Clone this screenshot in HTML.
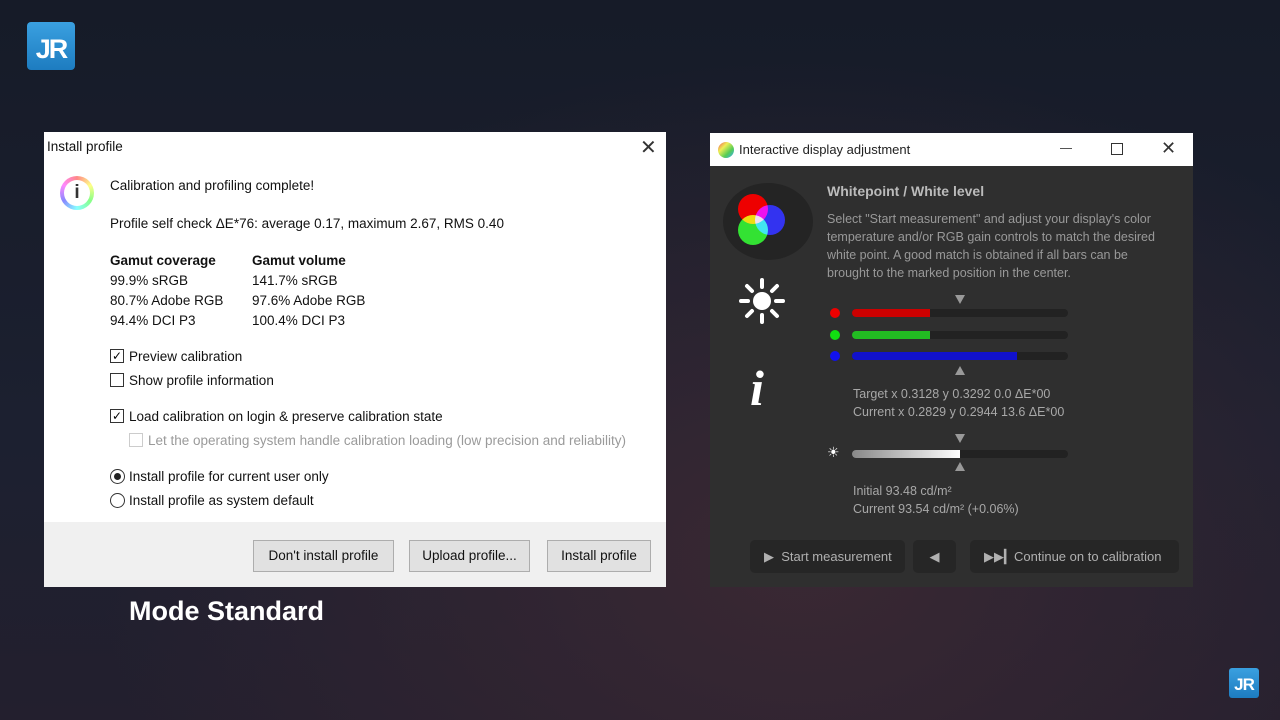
<!DOCTYPE html>
<html><head><meta charset="utf-8"><style>
*{margin:0;padding:0;box-sizing:border-box}
body{width:1280px;height:720px;overflow:hidden;position:relative;font-family:"Liberation Sans",sans-serif;
background:radial-gradient(ellipse 700px 500px at 800px 560px,#3a2833 0%,rgba(40,30,45,0) 100%),linear-gradient(180deg,#161b28 0%,#1c2030 60%,#231f2e 100%)}
.a{position:absolute;white-space:nowrap}
.dlg{position:absolute;left:44px;top:132px;width:622px;height:455px;background:#fff}
.dlg .a{font-size:13.5px;color:#111}
.foot{position:absolute;left:0;top:390px;width:622px;height:65px;background:#f0f0f0}
.btn{position:absolute;top:408px;height:32px;border:1px solid #adadad;background:#e1e1e1;font-size:13.5px;color:#111;text-align:center;line-height:30px}
.cb{position:absolute;width:14px;height:14px;border:1px solid #333;background:#fff}
.rb{position:absolute;width:15px;height:15px;border:1px solid #333;border-radius:50%;background:#fff}
.win{position:absolute;left:710px;top:133px;width:483px;height:454px;background:#2f2f2f}
.tb{position:absolute;left:0;top:0;width:483px;height:33px;background:#fff}
.win .t{font-size:12.5px;color:#a8a8a8}
.bar{position:absolute;left:142px;width:216px;height:8px;background:#222;border-radius:4px;overflow:hidden}
.dot{position:absolute;left:120px;width:10px;height:10px;border-radius:50%}
.tri{position:absolute;width:0;height:0;border-left:5px solid transparent;border-right:5px solid transparent}
.wb{position:absolute;top:407px;height:33px;background:#262626;border-radius:5px;color:#b0b0b0;font-size:13px;line-height:33px}
</style></head><body>
<div class="a" style="left:27px;top:22px;width:48px;height:48px;background:linear-gradient(#3aa0e0,#1d7cc0);border-radius:4px;color:#fff;font-weight:bold;font-size:27px;line-height:54px;text-align:center;letter-spacing:-2px">JR</div>
<div class="a" style="left:1229px;top:668px;width:30px;height:30px;background:linear-gradient(#3aa0e0,#1d7cc0);border-radius:3px;color:#fff;font-weight:bold;font-size:17px;line-height:33px;text-align:center;letter-spacing:-1px">JR</div>

<div class="dlg">
<div class="a" style="left:3px;top:7px">Install profile</div>
<div class="a" style="left:596px;top:3px;font-size:20px;color:#333">✕</div>
<div class="a" style="left:16px;top:44px;width:34px;height:34px;border-radius:50%;background:conic-gradient(#f88,#ff8,#8f8,#8ff,#88f,#f8f,#f88);"></div>
<div class="a" style="left:20px;top:48px;width:26px;height:26px;border-radius:50%;background:#fff;text-align:center;font-weight:bold;font-size:19px;line-height:26px;color:#333">i</div>
<div class="a" style="left:66px;top:46px">Calibration and profiling complete!</div>
<div class="a" style="left:66px;top:84px">Profile self check ΔE*76: average 0.17, maximum 2.67, RMS 0.40</div>
<div class="a" style="left:66px;top:121px;font-weight:bold">Gamut coverage</div>
<div class="a" style="left:66px;top:141px">99.9% sRGB</div>
<div class="a" style="left:66px;top:161px">80.7% Adobe RGB</div>
<div class="a" style="left:66px;top:181px">94.4% DCI P3</div>
<div class="a" style="left:208px;top:121px;font-weight:bold">Gamut volume</div>
<div class="a" style="left:208px;top:141px">141.7% sRGB</div>
<div class="a" style="left:208px;top:161px">97.6% Adobe RGB</div>
<div class="a" style="left:208px;top:181px">100.4% DCI P3</div>
<div class="cb" style="left:66px;top:217px;font-size:12px;line-height:12px;text-align:center">✓</div>
<div class="a" style="left:85px;top:217px">Preview calibration</div>
<div class="cb" style="left:66px;top:241px"></div>
<div class="a" style="left:85px;top:241px">Show profile information</div>
<div class="cb" style="left:66px;top:277px;font-size:12px;line-height:12px;text-align:center">✓</div>
<div class="a" style="left:85px;top:277px">Load calibration on login &amp; preserve calibration state</div>
<div class="cb" style="left:85px;top:301px;border-color:#ccc"></div>
<div class="a" style="left:104px;top:301px;color:#9a9a9a">Let the operating system handle calibration loading (low precision and reliability)</div>
<div class="rb" style="left:66px;top:337px"><div style="position:absolute;left:3px;top:3px;width:7px;height:7px;border-radius:50%;background:#222"></div></div>
<div class="a" style="left:85px;top:337px">Install profile for current user only</div>
<div class="rb" style="left:66px;top:361px"></div>
<div class="a" style="left:85px;top:361px">Install profile as system default</div>
<div class="foot"></div>
<div class="btn" style="left:209px;width:141px">Don't install profile</div>
<div class="btn" style="left:365px;width:121px">Upload profile...</div>
<div class="btn" style="left:503px;width:104px">Install profile</div>
</div>
<div class="a" style="left:129px;top:596px;color:#fff;font-weight:bold;font-size:27px">Mode Standard</div>

<div class="win">
<div class="tb"></div>
<div class="a" style="left:8px;top:9px;width:16px;height:16px;border-radius:50%;background:linear-gradient(135deg,#e55,#ee5,#5c5,#3af)"></div>
<div class="a" style="left:29px;top:9px;font-size:13px;color:#222">Interactive display adjustment</div>
<div class="a" style="left:350px;top:15px;width:12px;height:1px;background:#555"></div>
<div class="a" style="left:401px;top:10px;width:12px;height:12px;border:1px solid #333"></div>
<div class="a" style="left:451px;top:5px;font-size:18px;color:#333">✕</div>
<div class="a" style="left:13px;top:50px;width:90px;height:77px;border-radius:50%;background:#242424"></div>
<div class="a" style="left:28px;top:61px;width:30px;height:30px;border-radius:50%;background:#e00"></div>
<div class="a" style="left:45px;top:72px;width:30px;height:30px;border-radius:50%;background:#11e;mix-blend-mode:screen"></div>
<div class="a" style="left:28px;top:82px;width:30px;height:30px;border-radius:50%;background:#1d1;mix-blend-mode:screen"></div>
<svg class="a" style="left:28px;top:144px" width="48" height="48" viewBox="0 0 48 48" stroke="#fff" stroke-width="4" stroke-linecap="round" fill="none">
<circle cx="24" cy="24" r="9" fill="#fff" stroke="none"/>
<path d="M24 3v7M24 38v7M3 24h7M38 24h7M9 9l5 5M34 34l5 5M39 9l-5 5M14 34l-5 5"/></svg>
<div class="a" style="left:40px;top:226px;font-size:50px;font-style:italic;font-weight:bold;color:#fff;font-family:'Liberation Serif',serif">i</div>
<div class="a" style="left:117px;top:50px;font-size:14px;font-weight:bold;color:#bbb">Whitepoint / White level</div>
<div class="a t" style="left:117px;top:77px;line-height:18px;font-size:12.5px;color:#999">Select "Start measurement" and adjust your display's color<br>temperature and/or RGB gain controls to match the desired<br>white point. A good match is obtained if all bars can be<br>brought to the marked position in the center.</div>
<div class="tri" style="left:245px;top:162px;border-top:9px solid #999"></div>
<div class="dot" style="top:175px;background:#e00"></div>
<div class="bar" style="top:176px"><div style="width:78px;height:8px;background:#c00"></div></div>
<div class="dot" style="top:197px;background:#1d1"></div>
<div class="bar" style="top:198px"><div style="width:78px;height:8px;background:#2b2"></div></div>
<div class="dot" style="top:218px;background:#11e"></div>
<div class="bar" style="top:219px"><div style="width:165px;height:8px;background:#11c"></div></div>
<div class="tri" style="left:245px;top:233px;border-bottom:9px solid #999"></div>
<div class="a t" style="left:143px;top:254px">Target x 0.3128 y 0.3292 0.0 ΔE*00</div>
<div class="a t" style="left:143px;top:272px">Current x 0.2829 y 0.2944 13.6 ΔE*00</div>
<div class="tri" style="left:245px;top:301px;border-top:9px solid #999"></div>
<div class="a" style="left:117px;top:311px;font-size:14px;color:#fff">☀</div>
<div class="bar" style="top:317px"><div style="width:108px;height:8px;background:linear-gradient(90deg,#888,#fff)"></div></div>
<div class="tri" style="left:245px;top:329px;border-bottom:9px solid #999"></div>
<div class="a t" style="left:143px;top:351px">Initial 93.48 cd/m²</div>
<div class="a t" style="left:143px;top:369px">Current 93.54 cd/m² (+0.06%)</div>
<div class="wb" style="left:40px;width:155px;padding-left:14px">▶&nbsp; Start measurement</div>
<div class="wb" style="left:203px;width:43px;text-align:center">◀</div>
<div class="wb" style="left:260px;width:209px;padding-left:14px">▶▶▎Continue on to calibration</div>
</div>
</body></html>
